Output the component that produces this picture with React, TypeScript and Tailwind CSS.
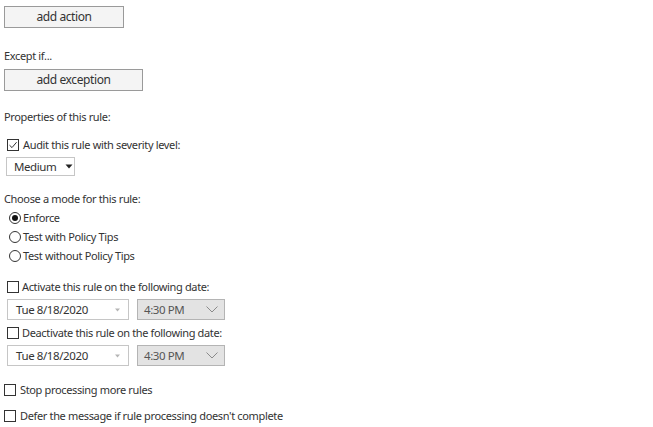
import React from 'react';

const font = { fontFamily: '"Noto Sans", "Open Sans", sans-serif' };

const Check = ({ checked = false }: { checked?: boolean }) => (
  <span className="w-[12px] h-[12px] border border-[#333] bg-white flex items-center justify-center shrink-0">
    {checked && (
      <svg width="10" height="10" viewBox="0 0 10 10">
        <path d="M1.5 5.2 L4 7.6 L8.6 2.2" fill="none" stroke="#333" strokeWidth="1" />
      </svg>
    )}
  </span>
);

const Radio = ({ checked = false }: { checked?: boolean }) => (
  <span className="w-[12px] h-[12px] rounded-full border border-[#333] bg-white flex items-center justify-center shrink-0">
    {checked && <span className="w-[6px] h-[6px] rounded-full bg-[#111]" />}
  </span>
);

const DateRow = () => (
  <div className="flex items-center gap-[8px] ml-[7px] h-[21px]">
    <div className="w-[122px] h-[21px] border border-[#c6c6c6] bg-white flex items-center justify-between pl-[8px] pr-[7px] text-[11.5px] tracking-[-0.4px] text-[#333]">
      <span>Tue 8/18/2020</span>
      <svg width="7" height="4" viewBox="0 0 7 4"><path d="M1 0.5 L3.5 3.5 L6 0.5 Z" fill="#b5b5b5" /></svg>
    </div>
    <div className="w-[88px] h-[21px] border border-[#b4b4b4] bg-[#e3e3e3] flex items-center justify-between pl-[6px] pr-[6px] text-[11.5px] tracking-[-0.4px] text-[#555]">
      <span>4:30 PM</span>
      <svg width="12" height="7" viewBox="0 0 12 7"><path d="M0.5 0.5 L6 6 L11.5 0.5" fill="none" stroke="#8a8a8a" strokeWidth="1" /></svg>
    </div>
  </div>
);

export default function App() {
  return (
    <div className="w-[653px] h-[427px] bg-white text-[#333] text-[11px] tracking-[-0.35px] leading-[16px] pt-[6px] overflow-hidden" style={font}>
      <button className="ml-[4px] w-[120px] h-[22px] border border-[#9a9a9a] bg-[#f4f4f4] text-[12px] tracking-[-0.4px] text-[#333] flex items-center justify-center">
        add action
      </button>
      <div className="ml-[4px] mt-[20px]">Except if...</div>
      <button className="ml-[4px] mt-[5px] w-[139px] h-[22px] border border-[#9a9a9a] bg-[#f4f4f4] text-[12px] tracking-[-0.4px] text-[#333] flex items-center justify-center">
        add exception
      </button>
      <div className="ml-[4px] mt-[18px]">Properties of this rule:</div>
      <div className="ml-[7px] mt-[12px] flex items-center gap-[4px]">
        <Check checked />
        <span>Audit this rule with severity level:</span>
      </div>
      <div className="ml-[6px] mt-[4px] w-[69px] h-[19px] border border-[#c6c6c6] bg-white flex items-center gap-[9px] pl-[7px] text-[11.5px] tracking-[-0.4px] text-[#333]">
        <span>Medium</span>
        <svg width="8" height="5" viewBox="0 0 8 5"><path d="M0.5 0.5 L4 4.5 L7.5 0.5 Z" fill="#222" /></svg>
      </div>
      <div className="ml-[4px] mt-[15px]">Choose a mode for this rule:</div>
      <div className="ml-[9px] mt-[3px] flex flex-col gap-[3px]">
        <div className="flex items-center gap-[2px]"><Radio checked /><span>Enforce</span></div>
        <div className="flex items-center gap-[2px]"><Radio /><span>Test with Policy Tips</span></div>
        <div className="flex items-center gap-[2px]"><Radio /><span>Test without Policy Tips</span></div>
      </div>
      <div className="ml-[7px] mt-[15px] flex items-center gap-[3px]">
        <Check />
        <span>Activate this rule on the following date:</span>
      </div>
      <div className="mt-[4px]"><DateRow /></div>
      <div className="ml-[7px] mt-[5px] flex items-center gap-[3px]">
        <Check />
        <span>Deactivate this rule on the following date:</span>
      </div>
      <div className="mt-[4px]"><DateRow /></div>
      <div className="ml-[4px] mt-[16px] flex items-center gap-[4px]">
        <Check />
        <span>Stop processing more rules</span>
      </div>
      <div className="ml-[4px] mt-[10px] flex items-center gap-[4px]">
        <Check />
        <span>Defer the message if rule processing doesn't complete</span>
      </div>
    </div>
  );
}
